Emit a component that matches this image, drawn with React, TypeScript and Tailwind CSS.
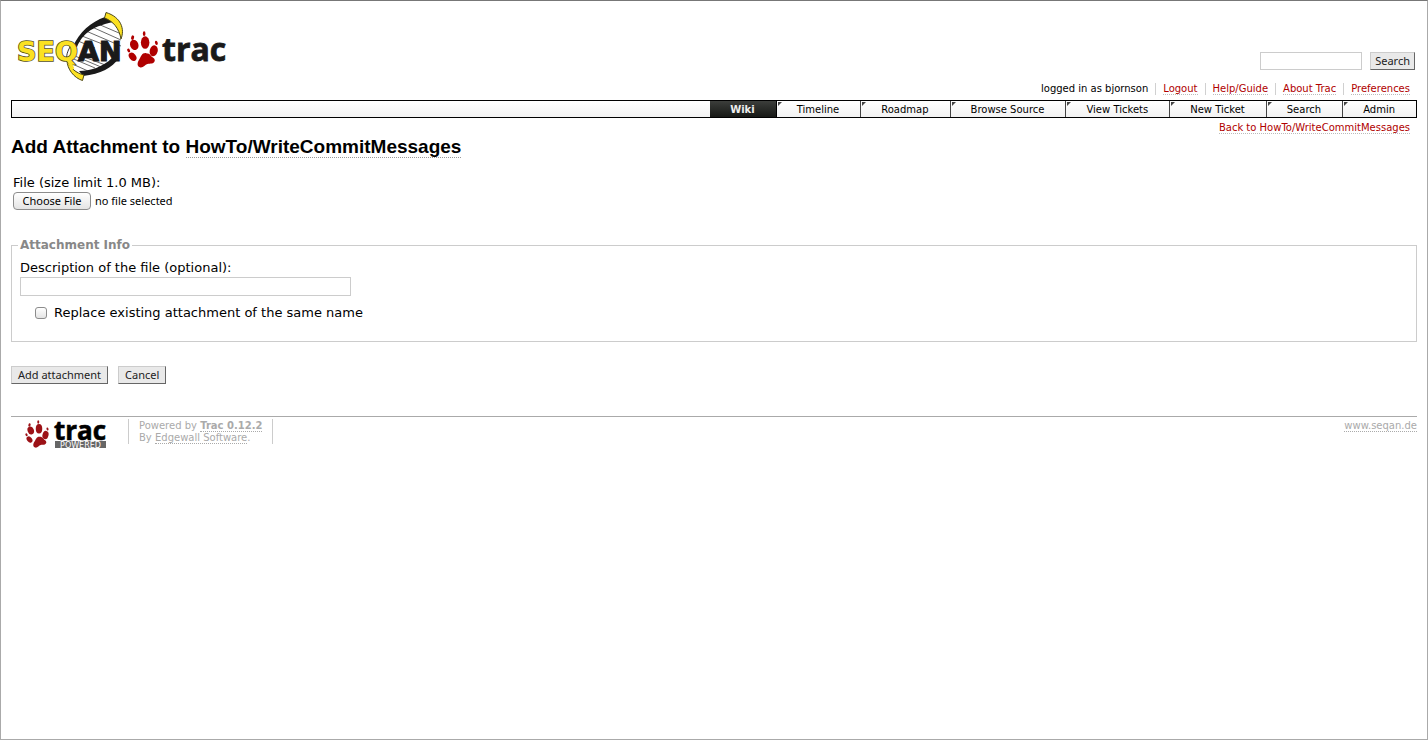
import { useRef } from 'react';
import type { ReactNode } from 'react';

const navItems = ['Timeline', 'Roadmap', 'Browse Source', 'View Tickets', 'New Ticket', 'Search', 'Admin'];
const metaItems = ['Logout', 'Help/Guide', 'About Trac', 'Preferences'];

const classicButton =
  "h-[18px] whitespace-nowrap border border-[#ccc] border-r-[#666] border-b-[#666] bg-[#e9e9e9] font-['Noto_Sans',sans-serif] text-[11px] leading-4 text-[#222]";

function RedLink({ children }: { children: ReactNode }) {
  return (
    <a href="#" className="border-b border-dotted border-[#bbb] text-[#b00000]">
      {children}
    </a>
  );
}

function PawShape() {
  return (
    <g>
      <ellipse cx="397" cy="171" rx="10" ry="14" transform="rotate(-38 397 171)" />
      <ellipse cx="385" cy="152" rx="4" ry="6" transform="rotate(-25 385 152)" />
      <ellipse cx="402" cy="135" rx="12.5" ry="16" transform="rotate(-22 402 135)" />
      <ellipse cx="397" cy="113" rx="4.5" ry="7" transform="rotate(15 397 113)" />
      <ellipse cx="435" cy="128" rx="13" ry="19" />
      <ellipse cx="432" cy="101" rx="4" ry="7" />
      <ellipse cx="461" cy="153" rx="12" ry="17" transform="rotate(14 461 153)" />
      <ellipse cx="469" cy="129" rx="4" ry="6.5" transform="rotate(-15 469 129)" />
      <path d="M438 160C424 159 423 171 418 178C412 186 408 199 419 203C429 206 434 195 442 193C451 191 461 194 464 184C466 175 456 173 452 167C449 162 444 160 438 160Z" />
    </g>
  );
}

function SiteLogo() {
  return (
    <svg width="222" height="72" viewBox="11 11 222 72" role="img" aria-label="SeqAn Trac">
      <path d="M105 17C91 22 78 33 75 45L67 62C67 68 73 73 82 75C99 73 116 66 121 52L121 36C119 26 113 20 105 17Z" fill="#fff" />
      <path
        d="M98 24L119 33M92 27L121 40M86 31L121 46M82 36L110 47M78 41L95 48M69 57L95 68M75 56L101 67M84 57L108 66M68 62L88 71"
        stroke="#444"
        strokeWidth="0.8"
        fill="none"
      />
      <path d="M105 17C91 22 79 32 73 47L77 47C82 35 90 27 113 22Z" fill="#1a1a1a" />
      <path d="M79 71C90 71 103 67 112 58L119 58C112 68 101 74 83 76Z" fill="#1a1a1a" />
      <path d="M72 44C67 51 66 56 67 61" stroke="#333" fill="none" />
      <path d="M106 12.500L104.500 18C113 21 119 28 121 39C125 29 121 17 106 12.500Z" fill="#fbe122" stroke="#4a4616" />
      <path d="M67 60C67 69 74 78 82.500 80.500L84 75C76 73 70 68 69 62Z" fill="#fbe122" stroke="#4a4616" />
      <g fontFamily="'DejaVu Sans', sans-serif" fontWeight="700" fontSize="27">
        <text x="17" y="61" fill="#fbe122" stroke="#55501a" strokeWidth="1.600" paintOrder="stroke">SEQ</text>
        <text x="78" y="61" fill="#1a1a1a" stroke="#1a1a1a" strokeWidth="1.200">AN</text>
      </g>
      <path d="M68.500 60L73 69" stroke="#fbe122" strokeWidth="3" />
      <svg x="127" y="31" width="31" height="37" viewBox="380 93 94 112" fill="#b00000">
        <PawShape />
      </svg>
      <text x="162" y="61" fontFamily="'Open Sans', sans-serif" fontWeight="700" fontSize="32" fill="#1a1a1a" stroke="#1a1a1a" strokeWidth="0.8">trac</text>
    </svg>
  );
}

function PoweredLogo() {
  return (
    <svg className="overflow-visible" width="90" height="30" viewBox="25 419 90 30" role="img" aria-label="Trac Powered">
      <svg x="25" y="420" width="24" height="28" viewBox="380 93 94 112" fill="#9c1217">
        <PawShape />
      </svg>
      <text x="54" y="440" fontFamily="'Open Sans', sans-serif" fontWeight="700" fontSize="26" fill="#000" stroke="#000" strokeWidth="0.6">trac</text>
      <rect x="55" y="441" width="51" height="7" fill="#666" />
      <text x="80.500" y="447.500" textAnchor="middle" fontFamily="'DejaVu Sans', sans-serif" fontSize="8" fill="#fff">POWERED</text>
    </svg>
  );
}

export default function App() {
  const fileRef = useRef<HTMLInputElement>(null);
  return (
    <div className="flex min-h-screen flex-col border border-[#aaa] border-t-[#777] bg-white px-2.5 font-['DejaVu_Sans',sans-serif] text-[13px] leading-[18px] text-black">
      <header className="flex justify-between pt-2.5">
        <a href="#" className="self-start">
          <SiteLogo />
        </a>
        <div className="flex flex-col items-end pt-[41px] pb-[5px] text-[10px] leading-3">
          <form className="mr-0.5 flex items-center gap-2" onSubmit={(e) => e.preventDefault()}>
            <input type="text" aria-label="Search" className="h-[18px] w-[102px] border border-[#ccc] px-1" />
            <button type="submit" className={`${classicButton} px-1`}>Search</button>
          </form>
          <ul className="mt-[13px] flex">
            <li className="px-[7px]">logged in as bjornson</li>
            {metaItems.map((item) => (
              <li key={item} className="border-l border-[#d0d0d0] px-[7px]">
                <RedLink>{item}</RedLink>
              </li>
            ))}
          </ul>
        </div>
      </header>

      <nav className="flex justify-end border border-black bg-linear-to-b from-white to-[#f2f2f2] text-[10px] leading-[14px]">
        <a href="#" className="border-r border-black bg-linear-to-b from-[#3c3e3b] to-[#171916] pt-0.5 pr-[21px] pl-5 font-bold text-[#eee]">
          Wiki
        </a>
        {navItems.map((item, i) => (
          <a key={item} href="#" className={i === 0 ? 'relative pt-0.5 pr-[21px] pl-5' : 'relative border-l border-[#444] pt-0.5 pr-[21px] pl-5'}>
            <svg className="absolute top-0 left-0" width="5" height="5" viewBox="0 0 5 5" aria-hidden="true">
              <path d="M1 1H5L1 5Z" fill="#444" />
            </svg>
            {item}
          </a>
        ))}
      </nav>

      <div className="flex items-start justify-between">
        <h1 className="mt-[17px] font-['Liberation_Sans',sans-serif] text-[19px] leading-6 font-bold">
          Add Attachment to{' '}
          <a href="#" className="border-b border-dotted border-[#999]">HowTo/WriteCommitMessages</a>
        </h1>
        <div className="mt-1 pr-[7px] text-[10px] leading-3">
          <RedLink>Back to HowTo/WriteCommitMessages</RedLink>
        </div>
      </div>

      <form onSubmit={(e) => e.preventDefault()}>
        <div className="mt-[15px] pl-0.5">
          <label htmlFor="attachment" className="block">File (size limit 1.0 MB):</label>
          <div className="flex items-center gap-1 font-['Noto_Sans',sans-serif] text-[11px]">
            <input ref={fileRef} id="attachment" type="file" className="sr-only" tabIndex={-1} />
            <button
              type="button"
              onClick={() => fileRef.current?.click()}
              className="h-[18px] w-[78px] rounded-[4px] border border-[#8c8c8c] bg-linear-to-b from-white to-[#e4e4e4] leading-4"
            >
              Choose File
            </button>
            <span>no file selected</span>
          </div>
        </div>

        <fieldset className="mt-[26px] border border-[#ccc] px-2 pb-[19px]">
          <legend className="-ml-0.5 px-0.5 text-[12px] leading-[18px] font-bold text-[#888]">Attachment Info</legend>
          <label htmlFor="description" className="mt-[5px] block">Description of the file (optional):</label>
          <input id="description" type="text" className="block h-[19px] w-[331px] max-w-full border border-[#ccc] px-1" />
          <div className="mt-2 ml-[15px] flex items-center gap-[7px]">
            <input
              id="replace"
              type="checkbox"
              className="size-3 appearance-none rounded-[3px] border border-[#8c8c8c] bg-linear-to-b from-white to-[#e4e4e4] checked:bg-[#666]"
            />
            <label htmlFor="replace">Replace existing attachment of the same name</label>
          </div>
        </fieldset>

        <div className="mt-6 flex gap-2.5">
          <button type="submit" className={`${classicButton} px-1.5`}>Add attachment</button>
          <button type="button" className={`${classicButton} px-1.5`}>Cancel</button>
        </div>
      </form>

      <footer className="mt-8 flex items-start border-t border-[#aaa] pt-0.5 text-[10px] leading-3 text-[#aaa]">
        <a href="#" className="mr-[13px] ml-3.5">
          <PoweredLogo />
        </a>
        <p className="border-x border-[#ccc] px-2.5 pt-px">
          Powered by{' '}
          <a href="#" className="border-b border-dotted border-[#aaa] font-bold">Trac 0.12.2</a>
          <br />
          By <a href="#" className="border-b border-dotted border-[#aaa]">Edgewall Software</a>.
        </p>
        <p className="ml-auto pt-px">
          <a href="#" className="border-b border-dotted border-[#aaa]">www.seqan.de</a>
        </p>
      </footer>
    </div>
  );
}
